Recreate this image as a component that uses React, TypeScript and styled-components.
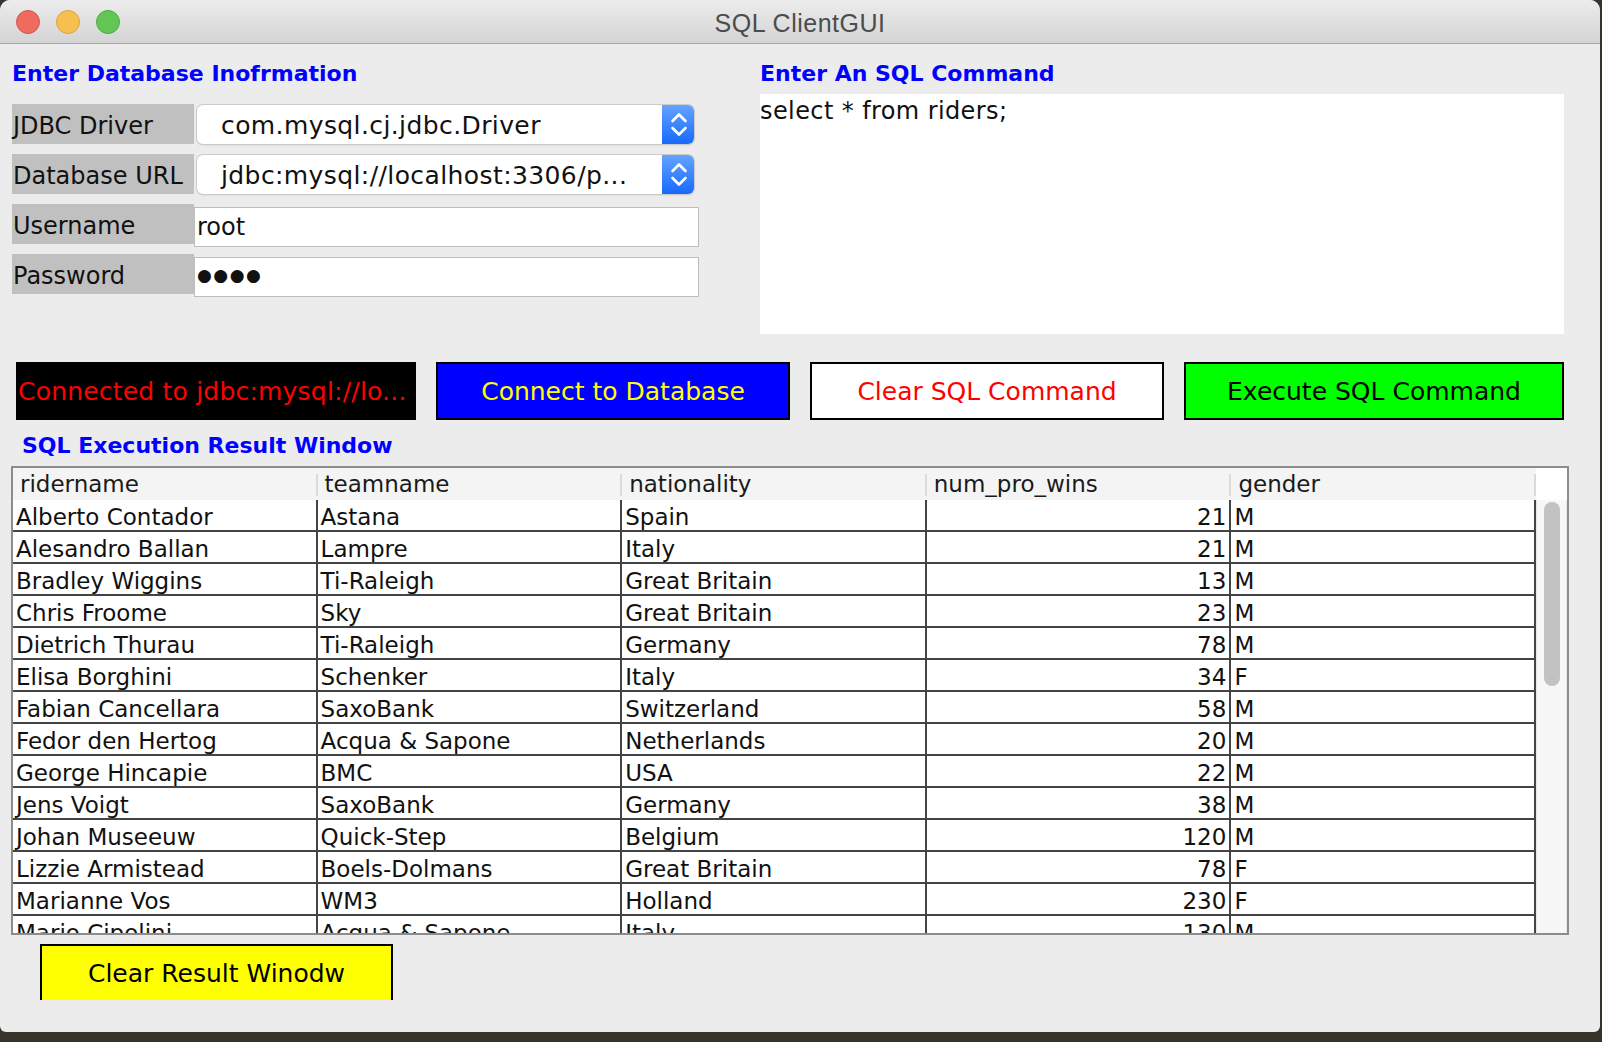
import React from "react";
import styled, { createGlobalStyle } from "styled-components";

const GlobalStyle = createGlobalStyle`
  html, body {
    margin: 0;
    padding: 0;
    background: #3a332c;
  }
  body {
    font-family: "DejaVu Sans", "Liberation Sans", sans-serif;
    color: #111;
  }
  * {
    box-sizing: border-box;
  }
`;

const Window = styled.div`
  width: 1600px;
  height: 1032px;
  background: #ececec;
  border-radius: 10px 10px 6px 6px;
  overflow: hidden;
  display: flex;
  flex-direction: column;
`;

const TitleBar = styled.div`
  height: 44px;
  flex-shrink: 0;
  display: grid;
  grid-template-columns: 1fr auto 1fr;
  align-items: center;
  background: linear-gradient(#ececec, #d4d4d4);
  border-bottom: 1px solid #a9a9a9;
`;

const Lights = styled.div`
  display: flex;
  gap: 16px;
  padding-left: 16px;
`;

const Light = styled.span<{ $fill: string; $edge: string }>`
  width: 24px;
  height: 24px;
  border-radius: 50%;
  background: ${(p) => p.$fill};
  border: 1px solid ${(p) => p.$edge};
`;

const Title = styled.div`
  font-family: "Liberation Sans", Arial, sans-serif;
  font-size: 25px;
  letter-spacing: 0.5px;
  color: #4c4c4c;
  padding-top: 4px;
`;

const TopSection = styled.div`
  display: flex;
  padding: 17px 0 0 12px;
`;

const LeftColumn = styled.div`
  width: 687px;
  display: flex;
  flex-direction: column;
`;

const RightColumn = styled.div`
  width: 804px;
  margin-left: 61px;
  display: flex;
  flex-direction: column;
`;

const SectionTitle = styled.div<{ $indent?: number }>`
  font-size: 22px;
  font-weight: bold;
  line-height: 26px;
  color: #0000ff;
  margin-left: ${(p) => p.$indent ?? 0}px;
`;

const FormGrid = styled.div`
  display: grid;
  grid-template-columns: 182px 505px;
  grid-auto-rows: 40px;
  row-gap: 10px;
  margin-top: 17px;
`;

const FieldLabel = styled.div`
  background: #c0c0c0;
  font-size: 24px;
  padding: 3px 0 0 1px;
  display: flex;
  align-items: center;
  color: #111;
`;

const Combo = styled.div`
  margin: 1px 5px 0 3px;
  height: 39px;
  display: flex;
  background: #fff;
  border-radius: 6px;
  box-shadow: 0 0 0 1px #cbcbcb, 0 1px 2px rgba(0, 0, 0, 0.18);
`;

const ComboText = styled.div`
  flex: 1;
  padding: 2px 0 0 24px;
  font-size: 25px;
  letter-spacing: 0.4px;
  display: flex;
  align-items: center;
  white-space: nowrap;
  color: #111;
`;

const ComboArrow = styled.div`
  width: 32px;
  border-radius: 0 6px 6px 0;
  background: linear-gradient(#64a3ff, #1769fb);
  display: flex;
`;

const TextField = styled.div`
  margin-top: 3px;
  height: 40px;
  background: #fff;
  border: 1px solid #bdbdbd;
  padding-left: 2px;
  font-size: 24px;
  display: flex;
  align-items: center;
  color: #111;
`;

const Dots = styled.span`
  font-size: 17px;
  letter-spacing: 1.5px;
  margin-top: -4px;
`;

const SqlArea = styled.div`
  margin-top: 7px;
  height: 240px;
  background: #fff;
  padding-top: 3px;
  font-size: 24px;
  letter-spacing: 0.4px;
  line-height: 28px;
  color: #111;
`;

const ButtonRow = styled.div`
  display: flex;
  align-items: flex-start;
  gap: 20px;
  margin: 28px 0 0 16px;
`;

const StatusLabel = styled.div`
  width: 400px;
  height: 58px;
  background: #000;
  color: #ff0000;
  font-size: 25px;
  letter-spacing: 0.2px;
  padding-left: 2px;
  display: flex;
  align-items: center;
  white-space: nowrap;
`;

const ActionButton = styled.div<{ $width: number; $bg: string; $fg: string }>`
  width: ${(p) => p.$width}px;
  height: 58px;
  flex-shrink: 0;
  border: 2px solid #000;
  background: ${(p) => p.$bg};
  color: ${(p) => p.$fg};
  font-size: 25px;
  display: flex;
  align-items: center;
  justify-content: center;
  white-space: nowrap;
`;

const ResultTitle = styled(SectionTitle)`
  margin-top: 13px;
`;

const TableBox = styled.div`
  margin: 7px 0 0 11px;
  width: 1558px;
  height: 469px;
  border: 2px solid #8c8c8c;
  background: #fff;
  display: flex;
`;

const TableMain = styled.div`
  flex: 1;
  display: flex;
  flex-direction: column;
  overflow: hidden;
`;

const HeaderRow = styled.div`
  display: grid;
  grid-template-columns: repeat(5, 1fr);
  height: 32px;
  flex-shrink: 0;
  padding: 6px 0 4px;
  background: #f4f4f4;
`;

const HeaderCell = styled.div`
  border-right: 2px solid #dadada;
  padding-left: 7px;
  font-size: 23px;
  line-height: 20px;
  color: #1a1a1a;
  white-space: nowrap;
`;

const BodyRow = styled.div`
  display: grid;
  grid-template-columns: repeat(5, 1fr);
  flex-shrink: 0;
`;

const Cell = styled.div<{ $align?: "left" | "right" }>`
  height: 32px;
  border-right: 2px solid #444;
  border-bottom: 2px solid #444;
  padding: 7px 3px 0 3px;
  font-size: 23px;
  line-height: 21px;
  text-align: ${(p) => p.$align ?? "left"};
  white-space: nowrap;
  color: #111;
`;

const ScrollColumn = styled.div`
  width: 31px;
  display: flex;
  flex-direction: column;
`;

const ScrollCorner = styled.div`
  height: 32px;
  background: #fff;
`;

const ScrollTrack = styled.div`
  flex: 1;
  background: #f7f7f7;
  border-left: 1px solid #e6e6e6;
  border-right: 1px solid #e6e6e6;
  padding: 2px 6px 0 7px;
`;

const ScrollThumb = styled.div`
  height: 184px;
  border-radius: 8px;
  background: #c2c2c2;
`;

const Dock = styled.div`
  margin: 9px 0 0 40px;
  width: 353px;
  height: 56px;
  overflow: hidden;
`;

const ComboChevrons = () => (
  <svg width="32" height="39" viewBox="0 0 32 39">
    <path
      d="M10.5 16 L17 9.5 L23.5 16 M10.5 23 L17 29.5 L23.5 23"
      fill="none"
      stroke="#fff"
      strokeWidth="2.6"
      strokeLinecap="round"
      strokeLinejoin="round"
    />
  </svg>
);

type Rider = [string, string, string, number, string];

const riders: Rider[] = [
  ["Alberto Contador", "Astana", "Spain", 21, "M"],
  ["Alesandro Ballan", "Lampre", "Italy", 21, "M"],
  ["Bradley Wiggins", "Ti-Raleigh", "Great Britain", 13, "M"],
  ["Chris Froome", "Sky", "Great Britain", 23, "M"],
  ["Dietrich Thurau", "Ti-Raleigh", "Germany", 78, "M"],
  ["Elisa Borghini", "Schenker", "Italy", 34, "F"],
  ["Fabian Cancellara", "SaxoBank", "Switzerland", 58, "M"],
  ["Fedor den Hertog", "Acqua & Sapone", "Netherlands", 20, "M"],
  ["George Hincapie", "BMC", "USA", 22, "M"],
  ["Jens Voigt", "SaxoBank", "Germany", 38, "M"],
  ["Johan Museeuw", "Quick-Step", "Belgium", 120, "M"],
  ["Lizzie Armistead", "Boels-Dolmans", "Great Britain", 78, "F"],
  ["Marianne Vos", "WM3", "Holland", 230, "F"],
  ["Mario Cipolini", "Acqua & Sapone", "Italy", 130, "M"],
];

const columns = ["ridername", "teamname", "nationality", "num_pro_wins", "gender"];

const App: React.FC = () => {
  return (
    <>
      <GlobalStyle />
      <Window>
        <TitleBar>
          <Lights>
            <Light $fill="#ee6b60" $edge="#d5574d" />
            <Light $fill="#f6bf4f" $edge="#dba43c" />
            <Light $fill="#62c655" $edge="#4ea943" />
          </Lights>
          <Title>SQL ClientGUI</Title>
          <div />
        </TitleBar>

        <TopSection>
          <LeftColumn>
            <SectionTitle>Enter Database Inofrmation</SectionTitle>
            <FormGrid>
              <FieldLabel>JDBC Driver</FieldLabel>
              <Combo>
                <ComboText>com.mysql.cj.jdbc.Driver</ComboText>
                <ComboArrow>
                  <ComboChevrons />
                </ComboArrow>
              </Combo>
              <FieldLabel>Database URL</FieldLabel>
              <Combo>
                <ComboText>jdbc:mysql://localhost:3306/p...</ComboText>
                <ComboArrow>
                  <ComboChevrons />
                </ComboArrow>
              </Combo>
              <FieldLabel>Username</FieldLabel>
              <TextField>root</TextField>
              <FieldLabel>Password</FieldLabel>
              <TextField>
                <Dots>●●●●</Dots>
              </TextField>
            </FormGrid>
          </LeftColumn>
          <RightColumn>
            <SectionTitle>Enter An SQL Command</SectionTitle>
            <SqlArea>select * from riders;</SqlArea>
          </RightColumn>
        </TopSection>

        <ButtonRow>
          <StatusLabel>Connected to jdbc:mysql://lo...</StatusLabel>
          <ActionButton $width={354} $bg="#0000ff" $fg="#ffff00">
            Connect to Database
          </ActionButton>
          <ActionButton $width={354} $bg="#ffffff" $fg="#ff0000">
            Clear SQL Command
          </ActionButton>
          <ActionButton $width={380} $bg="#00ff00" $fg="#000000">
            Execute SQL Command
          </ActionButton>
        </ButtonRow>

        <ResultTitle $indent={22}>SQL Execution Result Window</ResultTitle>

        <TableBox>
          <TableMain>
            <HeaderRow>
              {columns.map((c) => (
                <HeaderCell key={c}>{c}</HeaderCell>
              ))}
            </HeaderRow>
            {riders.map((r) => (
              <BodyRow key={r[0]}>
                <Cell>{r[0]}</Cell>
                <Cell>{r[1]}</Cell>
                <Cell>{r[2]}</Cell>
                <Cell $align="right">{r[3]}</Cell>
                <Cell>{r[4]}</Cell>
              </BodyRow>
            ))}
          </TableMain>
          <ScrollColumn>
            <ScrollCorner />
            <ScrollTrack>
              <ScrollThumb />
            </ScrollTrack>
          </ScrollColumn>
        </TableBox>

        <Dock>
          <ActionButton $width={353} $bg="#ffff00" $fg="#000000">
            Clear Result Winodw
          </ActionButton>
        </Dock>
      </Window>
    </>
  );
};

export default App;
